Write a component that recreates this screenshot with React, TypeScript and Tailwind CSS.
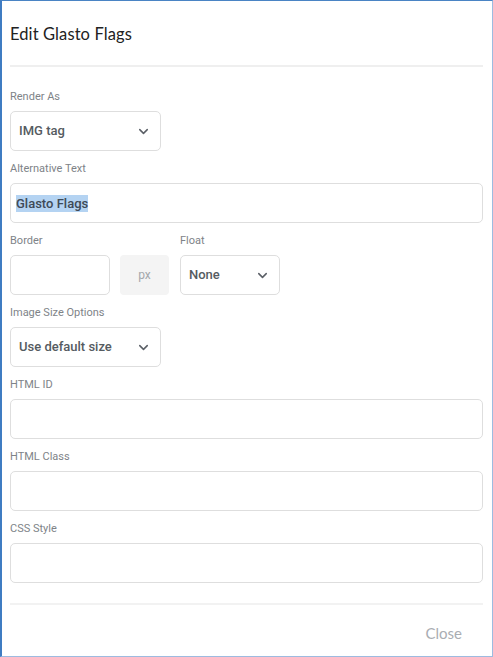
import { ChevronDown } from "lucide-react";

const label = "block text-[11px] leading-[14px] text-[#7e8388] mb-[7px]";
const box = "h-[40px] rounded-[5px] border border-[#dedede] bg-white";

function Select({ value, w }: { value: string; w: string }) {
  return (
    <div className={`${box} ${w} flex items-center justify-between pl-[8px] pr-[9px]`}>
      <span className="text-[13px] font-medium text-[#555b61]">{value}</span>
      <ChevronDown className="h-[15px] w-[15px] text-[#5a5f66]" strokeWidth={2.4} />
    </div>
  );
}

function Field({ name, children }: { name: string; children: React.ReactNode }) {
  return (
    <div className="mt-[11px] first:mt-0">
      <span className={label}>{name}</span>
      {children}
    </div>
  );
}

export default function App() {
  return (
    <div
      className="h-[657px] w-[493px] bg-white border-t border-r border-b border-l-2 border-t-[#4a84c4] border-l-[#3f7cc2] border-r-[#9dbbe0] border-b-[#9dbbe0] flex flex-col"
      style={{ fontFamily: "Roboto, 'Noto Sans', sans-serif" }}
    >
      <div className="px-[8px]">
        <h1
          className="pt-[21px] h-[64px] text-[16.5px] text-[#222] tracking-[0.1px]"
          style={{ fontFamily: "Lato, 'Open Sans', sans-serif" }}
        >
          Edit Glasto Flags
        </h1>
        <div className="h-[2px] bg-[#efefef] mr-[1px]" />

        <div className="pt-[23px] pr-[1px]">
          <Field name="Render As">
            <Select value="IMG tag" w="w-[151px]" />
          </Field>
          <Field name="Alternative Text">
            <div className={`${box} flex items-center px-[5px]`}>
              <span className="text-[13px] font-medium text-[#3e4a57] bg-[#b4d3f2] leading-[17px]">Glasto Flags</span>
            </div>
          </Field>
          <div className="mt-[11px] flex">
            <div>
              <span className={label}>Border</span>
              <div className="flex">
                <div className={`${box} w-[100px]`} />
                <div className="ml-[10px] h-[40px] w-[49px] rounded-[4px] bg-[#f4f4f4] flex items-center justify-center text-[12px] text-[#a4a8ac]">
                  px
                </div>
              </div>
            </div>
            <div className="ml-[11px]">
              <span className={label}>Float</span>
              <Select value="None" w="w-[100px]" />
            </div>
          </div>
          <Field name="Image Size Options">
            <Select value="Use default size" w="w-[151px]" />
          </Field>
          <Field name="HTML ID">
            <div className={box} />
          </Field>
          <Field name="HTML Class">
            <div className={box} />
          </Field>
          <Field name="CSS Style">
            <div className={box} />
          </Field>
        </div>

        <div className="mt-[20px] h-[2px] bg-[#f2f2f2] mr-[1px]" />
        <div className="flex justify-end pr-[22px] pt-[17px]">
          <span
            className="text-[15px] text-[#a9adb2]"
            style={{ fontFamily: "Lato, 'Open Sans', sans-serif" }}
          >
            Close
          </span>
        </div>
      </div>
    </div>
  );
}
